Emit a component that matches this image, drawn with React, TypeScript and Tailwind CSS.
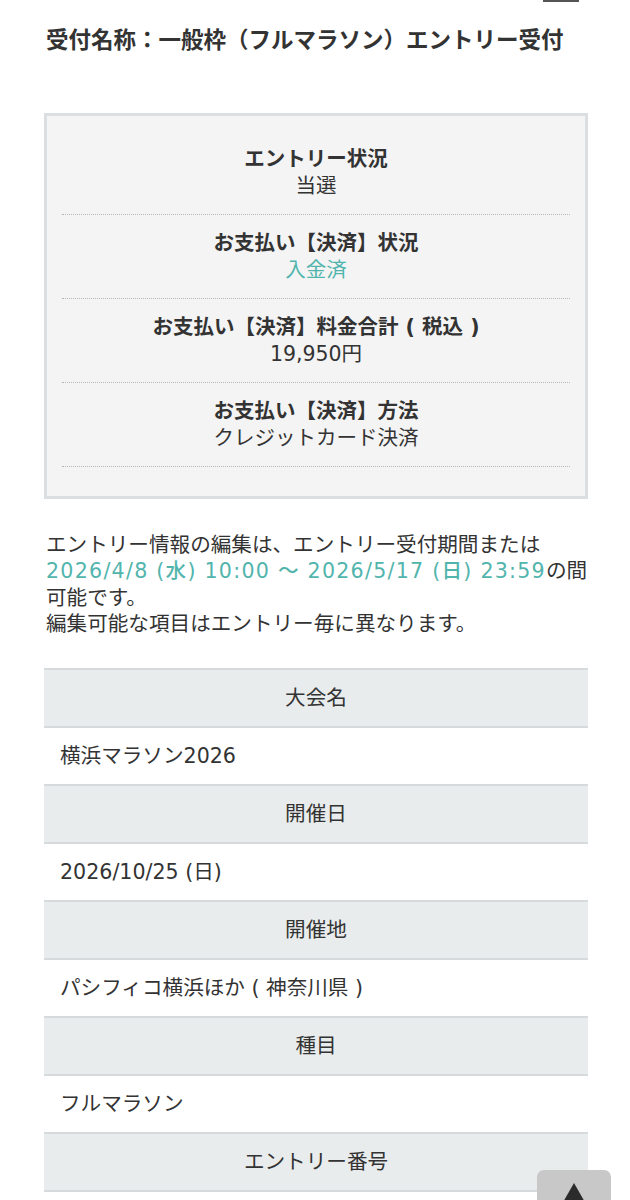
import React from "react";

const font = { fontFamily: '"DejaVu Sans", "Noto Sans CJK JP", "Noto Sans", sans-serif' };

const statusItems: { label: string; value: string; teal?: boolean }[] = [
  { label: "エントリー状況", value: "当選" },
  { label: "お支払い【決済】状況", value: "入金済", teal: true },
  { label: "お支払い【決済】料金合計 ( 税込 )", value: "19,950円" },
  { label: "お支払い【決済】方法", value: "クレジットカード決済" },
];

const rows: { head: string; value: string }[] = [
  { head: "大会名", value: "横浜マラソン2026" },
  { head: "開催日", value: "2026/10/25 (日)" },
  { head: "開催地", value: "パシフィコ横浜ほか ( 神奈川県 )" },
  { head: "種目", value: "フルマラソン" },
  { head: "エントリー番号", value: "" },
];

export default function App() {
  return (
    <div className="relative min-h-[1200px] bg-white text-[#333] overflow-hidden" style={font}>
      <div className="absolute left-[543px] top-0 h-[2px] w-[36px] bg-[#555]" />
      <div className="pl-[44px] pr-[42px]">
        <h1 className="pt-[24px] pl-[2px] text-[22.5px] leading-[32px] font-bold text-[#333] whitespace-nowrap">
          受付名称：一般枠（フルマラソン）エントリー受付
        </h1>

        <div className="mt-[57px] border-[3px] border-[#dcdfe1] bg-[#f4f4f4] px-[15px] pt-[15px] pb-[29px]">
          {statusItems.map((it) => (
            <div
              key={it.label}
              className="border-b border-dotted border-[#b5b5b5] pt-[15px] pb-[14px] text-center"
            >
              <div className="text-[20.5px] leading-[27px] font-bold whitespace-nowrap">{it.label}</div>
              <div
                className={
                  "text-[20.5px] leading-[27px] " + (it.teal ? "text-[#52b5ad]" : "text-[#333]")
                }
              >
                {it.value}
              </div>
            </div>
          ))}
        </div>

        <div className="mt-[33px] pl-[2px] text-[20.6px] leading-[26.3px]">
          <div className="whitespace-nowrap">エントリー情報の編集は、エントリー受付期間または</div>
          <div className="whitespace-nowrap">
            <span className="text-[#52b5ad] font-medium tracking-[1.25px]">
              2026/4/8 (水) 10:00 ～ 2026/5/17 (日) 23:59
            </span>
            の間
          </div>
          <div>可能です。</div>
          <div>編集可能な項目はエントリー毎に異なります。</div>
        </div>

        <div className="mt-[31px]">
          {rows.map((r) => (
            <React.Fragment key={r.head}>
              <div className="flex h-[58px] items-center justify-center border-t-2 border-[#d6dadd] bg-[#e9eced] text-[20.6px]">
                {r.head}
              </div>
              <div className="flex h-[58px] items-center border-t-2 border-[#d6dadd] bg-white pl-[16px] text-[20.6px]">
                {r.value}
              </div>
            </React.Fragment>
          ))}
        </div>
      </div>

      <div className="absolute left-[537px] top-[1170px] flex h-[50px] w-[74px] justify-center rounded-t-[7px] bg-[#c8c8c8] pt-[13px]">
        <svg width="32" height="28" viewBox="0 0 32 28">
          <polygon points="16,0 32,28 0,28" fill="#2b2b2b" />
        </svg>
      </div>
    </div>
  );
}
